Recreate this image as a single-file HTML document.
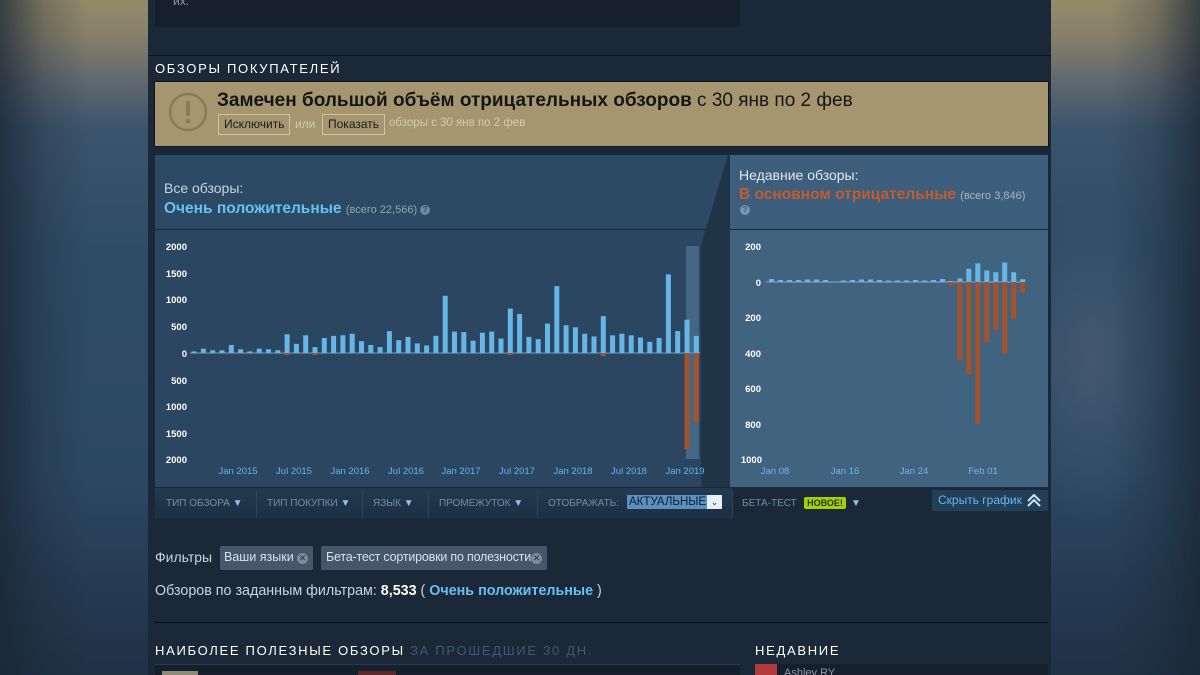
<!DOCTYPE html>
<html><head><meta charset="utf-8">
<style>
*{margin:0;padding:0;box-sizing:border-box}
html,body{width:1200px;height:675px;overflow:hidden}
body{position:relative;font-family:"Liberation Sans",Arial,sans-serif;background:#2d4862}
.bgL{position:absolute;left:0;top:0;width:148px;height:675px;background:
linear-gradient(90deg,rgba(25,38,52,.75) 0,rgba(25,38,52,.25) 30%,rgba(0,0,0,0) 60%),
linear-gradient(180deg,rgba(0,0,0,0) 70%,rgba(25,35,50,.5) 100%),
linear-gradient(180deg,#958a6a 0,#87806a 35px,#5e6670 85px,#3b546c 130px,#2f4c66 250px,#2c4862 500px,#27405a 675px)}
.bgR{position:absolute;left:1051px;top:0;width:149px;height:675px;background:
linear-gradient(270deg,rgba(25,38,52,.75) 0,rgba(25,38,52,.25) 30%,rgba(0,0,0,0) 60%),
linear-gradient(180deg,rgba(0,0,0,0) 70%,rgba(25,35,50,.5) 100%),
radial-gradient(ellipse 90px 160px at 40px 360px,rgba(90,105,125,.45),rgba(90,105,125,0)),
linear-gradient(180deg,#958a6a 0,#87806a 35px,#5e6670 85px,#3b546c 130px,#2f4c66 250px,#2c4862 500px,#27405a 675px)}
.col{position:absolute;left:148px;top:0;width:903px;height:675px;background:#1b2838}
.abs{position:absolute}
.t{position:absolute;white-space:nowrap}
.q{display:inline-block;vertical-align:1px;width:10px;height:10px;border-radius:50%;font-size:8px;text-align:center;line-height:10px;font-weight:bold;margin-left:3px}
</style></head><body>
<div class="bgL"></div><div class="bgR"></div>
<div class="col"></div>
<div class="abs" style="left:155px;top:0;width:585px;height:27px;background:#16202d"></div>
<div class="t" style="left:173px;top:-6px;font-size:12px;color:#8f98a0">их.</div>
<div class="abs" style="left:148px;top:55px;width:903px;height:1px;background:#0e141b"></div>

<div class="t" style="left:155px;top:61px;font-size:13px;letter-spacing:1.7px;color:#fff">ОБЗОРЫ ПОКУПАТЕЛЕЙ</div>

<div class="abs" style="left:154px;top:81px;width:895px;height:66px;background:#a5966f;border:1px solid #0e1620"></div>
<svg class="abs" style="left:168px;top:92px" width="40" height="40"><circle cx="20" cy="20" r="18" fill="none" stroke="#8a7b57" stroke-width="2.5"/><rect x="18" y="9" width="4" height="15" rx="1" fill="#8a7b57"/><circle cx="20" cy="29" r="2.3" fill="#8a7b57"/></svg>
<div class="t" style="left:217px;top:90px;font-size:19px;color:#161616"><b>Замечен большой объём отрицательных обзоров</b> с 30 янв по 2 фев</div>
<div class="t" style="left:218px;top:114px;height:21px;padding:0 5px;border:1px solid #cfc3a0;font-size:12px;line-height:19px;color:#1b1b1b">Исключить</div>
<div class="t" style="left:295px;top:117px;font-size:12px;color:#d4cab0">или</div>
<div class="t" style="left:322px;top:114px;height:21px;padding:0 5px;border:1px solid #cfc3a0;font-size:12px;line-height:19px;color:#1b1b1b">Показать</div>
<div class="t" style="left:389px;top:117px;font-size:11.5px;color:#d4cab0">обзоры с 30 янв по 2 фев</div>

<!-- left panel -->
<div class="abs" style="left:155px;top:155px;width:573px;height:74px;background:#2d4a65"></div>
<div class="abs" style="left:155px;top:230px;width:573px;height:257px;background:#2b4660"></div>
<div class="t" style="left:164px;top:180px;font-size:14px;color:#c6d4df">Все обзоры:</div>
<div class="t" style="left:164px;top:200px;font-size:15.5px;color:#66c0f4"><b>Очень положительные</b> <span style="font-size:11px;color:#8ba6b6">(всего 22,566)</span><span class="q" style="background:#6b8aa3;color:#2d4a65">?</span></div>

<!-- right panel -->
<div class="abs" style="left:730px;top:155px;width:318px;height:74px;background:#3d5e7c"></div>
<div class="abs" style="left:730px;top:230px;width:318px;height:257px;background:#40637f"></div>
<div class="t" style="left:739px;top:167px;font-size:14px;color:#e0e8ef">Недавние обзоры:</div>
<div class="t" style="left:739px;top:186px;font-size:15.5px;color:#c35c2c"><b>В основном отрицательные</b> <span style="font-size:11px;color:#a4b6c4">(всего 3,846)</span></div>
<div class="abs" style="left:740px;top:205px;width:10px;height:10px;border-radius:50%;background:#7a96ad;font-size:8px;color:#3d5e7c;text-align:center;line-height:10px;font-weight:bold">?</div>

<svg class="abs" style="left:0;top:0" width="1200" height="675">
<polygon points="728,155 730,155 730,487 701,487 701,245" fill="#203447"/>
<rect x="686" y="246" width="13" height="213" fill="#4d7391" opacity=".75"/>
<g font-family="Liberation Sans,Arial,sans-serif" font-size="9.5" font-weight="bold" fill="#ffffff" text-anchor="end">
<text x="187" y="250">2000</text><text x="187" y="277">1500</text><text x="187" y="303">1000</text><text x="187" y="330">500</text><text x="187" y="357">0</text><text x="187" y="384">500</text><text x="187" y="410">1000</text><text x="187" y="437">1500</text><text x="187" y="463">2000</text>
</g>
<g font-family="Liberation Sans,Arial,sans-serif" font-size="9.5" fill="#66b4e6" text-anchor="middle">
<text x="238" y="474">Jan 2015</text><text x="294" y="474">Jul 2015</text><text x="350" y="474">Jan 2016</text><text x="406" y="474">Jul 2016</text><text x="461" y="474">Jan 2017</text><text x="517" y="474">Jul 2017</text><text x="573" y="474">Jan 2018</text><text x="629" y="474">Jul 2018</text><text x="685" y="474">Jan 2019</text>
</g>
<line x1="190" y1="353" x2="700" y2="353" stroke="#7d9bb3" stroke-width="1"/>
<g fill="#67b6e8">
<rect x="191.6" y="351.4" width="5" height="1.6"/><rect x="200.9" y="348.7" width="5" height="4.3"/><rect x="210.2" y="350.3" width="5" height="2.7"/><rect x="219.5" y="350.3" width="5" height="2.7"/><rect x="228.8" y="345" width="5" height="8"/><rect x="238.1" y="349.3" width="5" height="3.7"/><rect x="247.4" y="351.4" width="5" height="1.6"/><rect x="256.7" y="348.7" width="5" height="4.3"/><rect x="266" y="349.3" width="5" height="3.7"/><rect x="275.3" y="350.3" width="5" height="2.7"/>
<rect x="284.6" y="334.3" width="5" height="18.7"/><rect x="293.9" y="343.9" width="5" height="9.1"/><rect x="303.2" y="335.3" width="5" height="17.7"/><rect x="312.5" y="347.1" width="5" height="5.9"/><rect x="321.8" y="338" width="5" height="15"/><rect x="331.1" y="335.9" width="5" height="17.1"/><rect x="340.4" y="335.3" width="5" height="17.7"/><rect x="349.7" y="333.7" width="5" height="19.3"/><rect x="359" y="341.2" width="5" height="11.8"/><rect x="368.3" y="345" width="5" height="8"/>
<rect x="377.6" y="347.1" width="5" height="5.9"/><rect x="386.9" y="331.1" width="5" height="21.9"/><rect x="396.2" y="340.2" width="5" height="12.8"/><rect x="405.5" y="336.9" width="5" height="16.1"/><rect x="414.8" y="343.4" width="5" height="9.6"/><rect x="424.1" y="345.5" width="5" height="7.5"/><rect x="433.4" y="335.9" width="5" height="17.1"/><rect x="442.7" y="295.8" width="5" height="57.2"/><rect x="452" y="331.6" width="5" height="21.4"/><rect x="461.3" y="332.1" width="5" height="20.9"/>
<rect x="470.6" y="340.7" width="5" height="12.3"/><rect x="479.9" y="332.7" width="5" height="20.3"/><rect x="489.2" y="331.6" width="5" height="21.4"/><rect x="498.5" y="338.6" width="5" height="14.4"/><rect x="507.8" y="308.6" width="5" height="44.4"/><rect x="517.1" y="313.9" width="5" height="39.1"/><rect x="526.4" y="336.9" width="5" height="16.1"/><rect x="535.7" y="339.1" width="5" height="13.9"/><rect x="545" y="323.6" width="5" height="29.4"/><rect x="554.3" y="286.1" width="5" height="66.9"/>
<rect x="563.6" y="325.2" width="5" height="27.8"/><rect x="572.9" y="327.3" width="5" height="25.7"/><rect x="582.2" y="333.7" width="5" height="19.3"/><rect x="591.5" y="336.4" width="5" height="16.6"/><rect x="600.8" y="316.1" width="5" height="36.9"/><rect x="610.1" y="335.3" width="5" height="17.7"/><rect x="619.4" y="333.7" width="5" height="19.3"/><rect x="628.7" y="335.3" width="5" height="17.7"/><rect x="638" y="337.5" width="5" height="15.5"/><rect x="647.3" y="341.8" width="5" height="11.2"/>
<rect x="656.6" y="338" width="5" height="15"/><rect x="665.9" y="274.4" width="5" height="78.6"/><rect x="675.2" y="331.1" width="5" height="21.9"/><rect x="684.5" y="319.8" width="5" height="33.2"/><rect x="693.8" y="335.9" width="5" height="17.1"/>
</g>
<g fill="#a4512d">
<rect x="284.6" y="353" width="5" height="2"/><rect x="312.5" y="353" width="5" height="2"/><rect x="507.8" y="353" width="5" height="2"/><rect x="600.8" y="353" width="5" height="3"/>
<rect x="684.5" y="353" width="5" height="96.3"/><rect x="693.8" y="353" width="5" height="69.6"/>
</g>

<g font-family="Liberation Sans,Arial,sans-serif" font-size="9.5" font-weight="bold" fill="#ffffff" text-anchor="end">
<text x="761" y="250">200</text><text x="761" y="286">0</text><text x="761" y="321">200</text><text x="761" y="357">400</text><text x="761" y="392">600</text><text x="761" y="428">800</text><text x="762" y="463">1000</text>
</g>
<g font-family="Liberation Sans,Arial,sans-serif" font-size="9.5" fill="#6fb6e6" text-anchor="middle">
<text x="775" y="474">Jan 08</text><text x="845" y="474">Jan 16</text><text x="914" y="474">Jan 24</text><text x="983" y="474">Feb 01</text>
</g>
<line x1="766" y1="282" x2="1024" y2="282" stroke="#89a9c2" stroke-width="1"/>
<g fill="#67b6e8">
<rect x="769" y="279" width="5" height="3"/><rect x="778" y="280" width="5" height="2"/><rect x="787" y="280" width="5" height="2"/><rect x="796" y="280" width="5" height="2"/><rect x="805" y="279.5" width="5" height="2.5"/><rect x="814" y="279.5" width="5" height="2.5"/><rect x="823" y="280" width="5" height="2"/>
<rect x="841" y="280.5" width="5" height="1.5"/><rect x="850" y="280" width="5" height="2"/><rect x="859" y="279.5" width="5" height="2.5"/><rect x="868" y="279.5" width="5" height="2.5"/><rect x="877" y="280" width="5" height="2"/><rect x="886" y="280.5" width="5" height="1.5"/><rect x="895" y="280.5" width="5" height="1.5"/><rect x="904" y="280.5" width="5" height="1.5"/><rect x="913" y="280" width="5" height="2"/><rect x="922" y="280.5" width="5" height="1.5"/><rect x="931" y="280" width="5" height="2"/><rect x="940" y="279" width="5" height="3"/>
<rect x="948.4" y="281" width="5" height="1"/><rect x="957.4" y="278.4" width="5" height="3.6"/><rect x="966.3" y="268.7" width="5" height="13.3"/><rect x="975.3" y="263.4" width="5" height="18.6"/><rect x="984.3" y="270.5" width="5" height="11.5"/><rect x="993.3" y="272.2" width="5" height="9.8"/><rect x="1002.2" y="262.5" width="5" height="19.5"/><rect x="1011.2" y="272.2" width="5" height="9.8"/><rect x="1020.2" y="279.3" width="5" height="2.7"/>
</g>
<g fill="#a4512d">
<rect x="948.4" y="282" width="5" height="3.6"/><rect x="957.4" y="282" width="5" height="78.1"/><rect x="966.3" y="282" width="5" height="92.3"/><rect x="975.3" y="282" width="5" height="142"/><rect x="984.3" y="282" width="5" height="60.4"/><rect x="993.3" y="282" width="5" height="47.9"/><rect x="1002.2" y="282" width="5" height="71"/><rect x="1011.2" y="282" width="5" height="37.3"/><rect x="1020.2" y="282" width="5" height="10.7"/>
</g>
</svg>

<div class="abs" style="left:155px;top:488px;width:577px;height:31px;background:linear-gradient(180deg,#223a50,#1d2f42)"></div>
<div class="abs" style="left:256px;top:490px;width:1px;height:28px;background:#2f455a"></div>
<div class="abs" style="left:362px;top:490px;width:1px;height:28px;background:#2f455a"></div>
<div class="abs" style="left:428px;top:490px;width:1px;height:28px;background:#2f455a"></div>
<div class="abs" style="left:537px;top:490px;width:1px;height:28px;background:#2f455a"></div>
<div class="abs" style="left:732px;top:490px;width:1px;height:28px;background:#2f455a"></div>
<div class="t" style="left:166px;top:498px;font-size:10px;color:#6f8fa6">ТИП ОБЗОРА <span style="color:#8fc2e8">▼</span></div>
<div class="t" style="left:267px;top:498px;font-size:10px;color:#6f8fa6">ТИП ПОКУПКИ <span style="color:#8fc2e8">▼</span></div>
<div class="t" style="left:373px;top:498px;font-size:10px;color:#6f8fa6">ЯЗЫК <span style="color:#8fc2e8">▼</span></div>
<div class="t" style="left:439px;top:498px;font-size:10px;color:#6f8fa6">ПРОМЕЖУТОК <span style="color:#8fc2e8">▼</span></div>
<div class="t" style="left:548px;top:498px;font-size:10px;color:#6f8fa6">ОТОБРАЖАТЬ:</div>
<div class="abs" style="left:627px;top:495px;width:80px;height:14px;background:#5a8fbf;font-size:11.5px;line-height:14px;color:#0f1e2e;padding-left:2px">АКТУАЛЬНЫЕ</div>
<div class="abs" style="left:707px;top:495px;width:15px;height:14px;background:#e8eef3;font-size:9px;line-height:14px;color:#333;text-align:center">⌄</div>
<div class="t" style="left:742px;top:498px;font-size:10px;color:#6f8fa6">БЕТА-ТЕСТ</div>
<div class="abs" style="left:804px;top:497px;width:42px;height:12px;background:#a4d007;border-radius:2px;font-size:9px;font-weight:bold;line-height:12px;color:#2a3a10;text-align:center">НОВОЕ!</div>
<div class="t" style="left:851px;top:498px;font-size:10px;color:#8fc2e8">▼</div>
<div class="abs" style="left:932px;top:490px;width:116px;height:21px;background:#223f58"></div>
<div class="t" style="left:938px;top:493px;font-size:12px;color:#67b8ea">Скрыть график</div>
<svg class="abs" style="left:1026px;top:492px" width="16" height="16"><path d="M2 9 L8 3 L14 9 M2 14 L8 8 L14 14" fill="none" stroke="#cfe3f2" stroke-width="2"/></svg>

<div class="t" style="left:155px;top:549px;font-size:14px;color:#c6d4df">Фильтры</div>
<div class="abs" style="left:220px;top:546px;width:93px;height:24px;background:#45576a;border-radius:2px"></div>
<div class="t" style="left:224px;top:550px;font-size:12.5px;color:#d6e1ea">Ваши языки</div>
<div class="abs" style="left:297px;top:553px;width:11px;height:11px;border-radius:50%;background:#7d8c9b;font-size:9px;line-height:11px;text-align:center;color:#2a3542">✕</div>
<div class="abs" style="left:321px;top:546px;width:226px;height:24px;background:#45576a;border-radius:2px"></div>
<div class="t" style="left:326px;top:550px;font-size:12.5px;letter-spacing:-.2px;color:#d6e1ea">Бета-тест сортировки по полезности</div>
<div class="abs" style="left:531px;top:553px;width:11px;height:11px;border-radius:50%;background:#7d8c9b;font-size:9px;line-height:11px;text-align:center;color:#2a3542">✕</div>

<div class="t" style="left:155px;top:583px;font-size:14.3px;color:#c6d4df">Обзоров по заданным фильтрам: <b style="color:#fff">8,533</b> ( <b style="color:#66c0f4">Очень положительные</b> )</div>

<div class="abs" style="left:155px;top:622px;width:893px;height:1px;background:#0a0f15"></div>

<div class="t" style="left:155px;top:643px;font-size:13px;letter-spacing:1.7px;color:#fff">НАИБОЛЕЕ ПОЛЕЗНЫЕ ОБЗОРЫ <span style="color:#3f5a70">ЗА ПРОШЕДШИЕ 30 ДН.</span></div>
<div class="t" style="left:755px;top:643px;font-size:13px;letter-spacing:1.7px;color:#fff">НЕДАВНИЕ</div>
<div class="abs" style="left:155px;top:664px;width:585px;height:11px;background:#16202d;border-top:1px solid #2a3a4a"></div>
<div class="abs" style="left:162px;top:671px;width:36px;height:4px;background:#8d8a78"></div>
<div class="abs" style="left:358px;top:671px;width:38px;height:4px;background:#5a2a2a"></div>
<div class="abs" style="left:755px;top:664px;width:293px;height:11px;background:#16202d"></div>
<div class="abs" style="left:755px;top:664px;width:22px;height:11px;background:#b23a3a"></div>
<div class="t" style="left:784px;top:667px;font-size:11px;color:#8f98a0">Ashley RY</div>
</body></html>
